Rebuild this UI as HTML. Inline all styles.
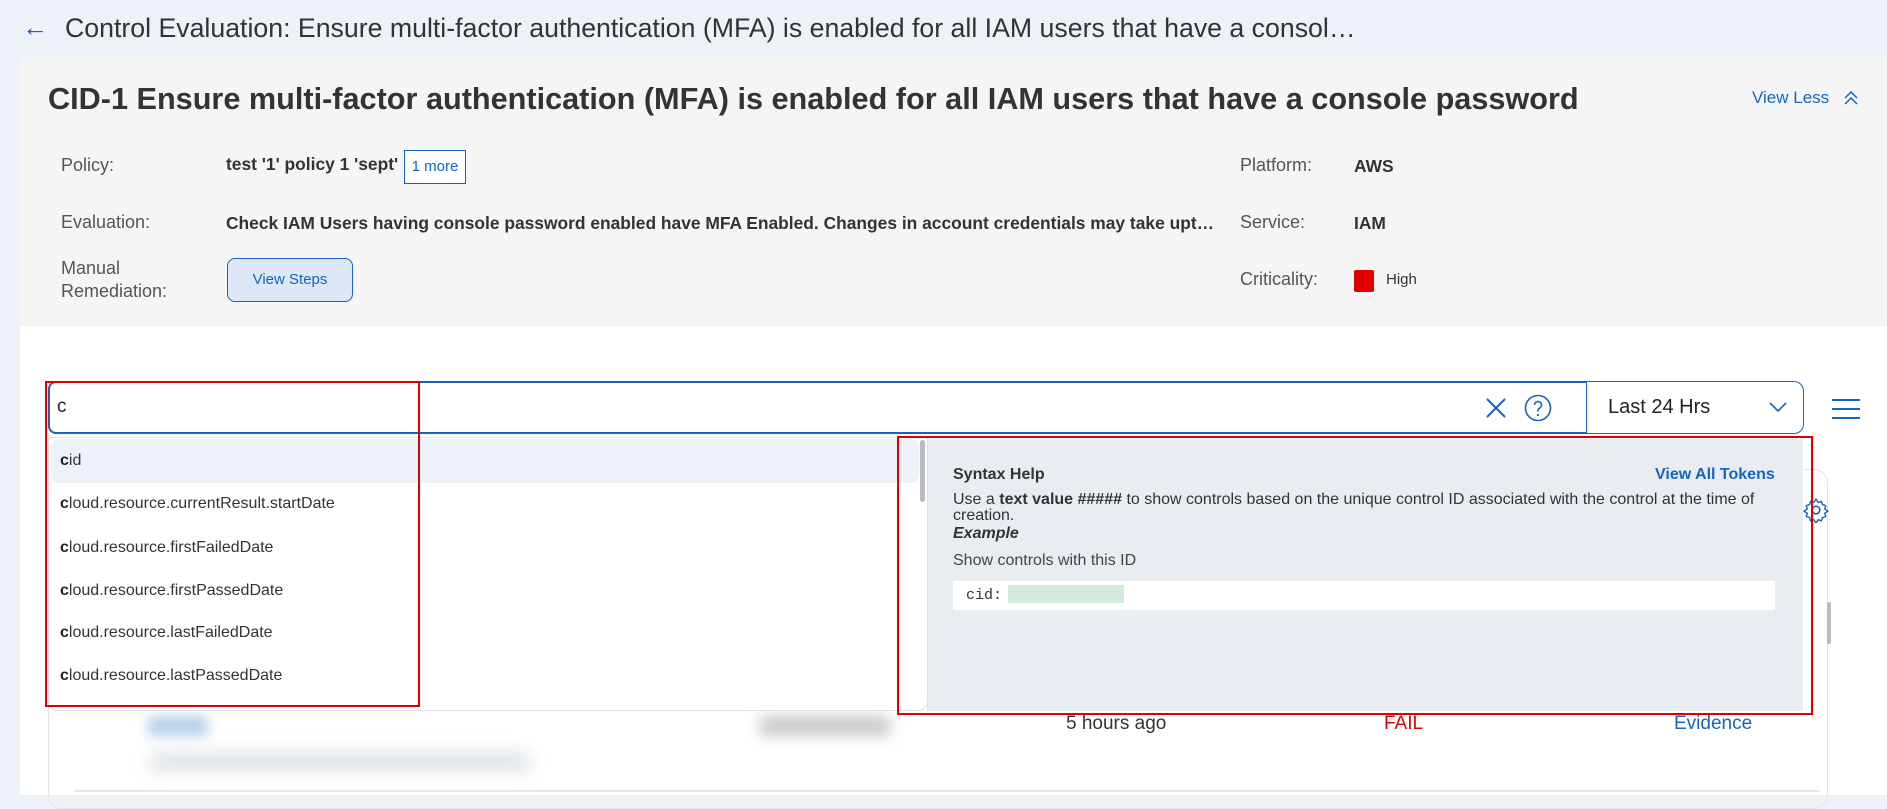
<!DOCTYPE html>
<html><head><meta charset="utf-8"><style>
*{box-sizing:border-box;margin:0;padding:0}
body{width:1887px;height:795px;overflow:hidden;background:#edf1f8;font-family:"Liberation Sans",sans-serif;position:relative;color:#333}
.a{position:absolute;white-space:nowrap}
.lbl{font-size:18px;color:#555}
.val{font-size:17.4px;font-weight:bold;color:#333}
.item{position:absolute;left:48px;width:874px;height:44px;line-height:44px;padding-left:12px;font-size:16px;color:#333}
.item b{color:#222}
</style></head><body>
<div class="a" style="left:22px;top:12px;font-size:26px;color:#1565c0;font-weight:lighter">&#8592;</div>
<div class="a" style="left:65px;top:13px;font-size:26.7px;color:#333">Control Evaluation: Ensure multi-factor authentication (MFA) is enabled for all IAM users that have a consol…</div>

<div class="a" style="left:20px;top:57px;width:1867px;height:269px;background:#f5f5f5;border-radius:8px 0 0 0"></div>
<div class="a" style="left:48px;top:82px;font-size:30.65px;font-weight:bold;color:#333">CID-1 Ensure multi-factor authentication (MFA) is enabled for all IAM users that have a console password</div>
<div class="a" style="left:1752px;top:88px;font-size:17px;color:#1565c0">View Less</div>
<svg class="a" style="left:1843px;top:89px" width="16" height="18" viewBox="0 0 16 18"><path d="M2 9 L8 3 L14 9 M2 15 L8 9 L14 15" fill="none" stroke="#1565c0" stroke-width="1.5"/></svg>

<div class="a lbl" style="left:61px;top:155px">Policy:</div>
<div class="a val" style="left:226px;top:154px">test '1' policy 1 'sept'</div>
<div class="a" style="left:404px;top:150px;width:62px;height:34px;border:1px solid #1565c0;background:#fff;font-size:15px;color:#1565c0;line-height:32px;text-align:center">1 more</div>
<div class="a lbl" style="left:61px;top:212px">Evaluation:</div>
<div class="a val" style="left:226px;top:213px">Check IAM Users having console password enabled have MFA Enabled. Changes in account credentials may take upt…</div>
<div class="a lbl" style="left:61px;top:257px;line-height:23px">Manual<br>Remediation:</div>
<div class="a" style="left:227px;top:258px;width:126px;height:44px;border:1px solid #1565c0;border-radius:8px;background:#dce8f5;color:#1565c0;font-size:15px;line-height:42px;text-align:center">View Steps</div>
<div class="a lbl" style="left:1240px;top:155px">Platform:</div>
<div class="a val" style="left:1354px;top:156px">AWS</div>
<div class="a lbl" style="left:1240px;top:212px">Service:</div>
<div class="a val" style="left:1354px;top:213px">IAM</div>
<div class="a lbl" style="left:1240px;top:269px">Criticality:</div>
<div class="a" style="left:1354px;top:270px;width:20px;height:22px;background:#e00000;border-radius:2px"></div>
<div class="a" style="left:1386px;top:271px;font-size:15px;color:#333">High</div>

<div class="a" style="left:20px;top:326px;width:1867px;height:469px;background:#fff"></div>

<div class="a" style="left:48px;top:469px;width:1780px;height:340px;border:1px solid #e2e6ea;border-radius:14px"></div>
<svg class="a" style="left:1803px;top:497px" width="26" height="26" viewBox="0 0 24 24"><circle cx="12" cy="12" r="3.5" fill="none" stroke="#1565c0" stroke-width="1.5"/><path d="M12 2l2 3 3-1 1 3 3 1-1 3 3 2-3 2 1 3-3 1-1 3-3-1-2 3-2-3-3 1-1-3-3-1 1-3-3-2 3-2-1-3 3-1 1-3 3 1z" fill="none" stroke="#1565c0" stroke-width="1.3"/></svg>
<div class="a" style="left:924px;top:556px;width:876px;height:44px;background:#eef2f8;border-radius:8px"></div>
<div class="a" style="left:1827px;top:602px;width:4px;height:42px;background:#bbb;border-radius:2px"></div>
<div class="a" style="left:1066px;top:713px;font-size:19px;color:#333">5 hours ago</div>
<div class="a" style="left:1384px;top:713px;font-size:19px;color:#e00000">FAIL</div>
<div class="a" style="left:1674px;top:713px;font-size:19px;color:#1565c0">Evidence</div>
<div class="a" style="left:148px;top:716px;width:60px;height:20px;background:#b8d0ea;filter:blur(6px)"></div>
<div class="a" style="left:150px;top:752px;width:380px;height:20px;background:#e0e4e8;filter:blur(8px)"></div>
<div class="a" style="left:760px;top:716px;width:130px;height:20px;background:#c8cacc;filter:blur(7px)"></div>
<div class="a" style="left:75px;top:790px;width:1745px;height:2px;background:#e4e6e8"></div>

<div class="a" style="left:48px;top:381px;width:1540px;height:53px;border:2px solid #1565c0;border-radius:8px 0 0 8px;background:#fff"></div>
<div class="a" style="left:57px;top:396px;font-size:19px;color:#222">c</div>
<svg class="a" style="left:1484px;top:396px" width="24" height="24" viewBox="0 0 24 24"><path d="M3 3L21 21M21 3L3 21" stroke="#1565c0" stroke-width="2"/></svg>
<svg class="a" style="left:1524px;top:394px" width="28" height="28" viewBox="0 0 28 28"><circle cx="14" cy="14" r="12.5" fill="none" stroke="#1565c0" stroke-width="1.6"/><path d="M10.5 11a3.5 3.5 0 1 1 5 3.2c-1 .5-1.5 1.2-1.5 2.3v1" fill="none" stroke="#1565c0" stroke-width="1.6"/><circle cx="14" cy="21" r="1.1" fill="#1565c0"/></svg>
<div class="a" style="left:1586px;top:381px;width:218px;height:53px;border:1.5px solid #1565c0;border-radius:0 10px 10px 0;background:#fff"></div>
<div class="a" style="left:1608px;top:396px;font-size:20px;color:#222">Last 24 Hrs</div>
<svg class="a" style="left:1768px;top:400px" width="20" height="14" viewBox="0 0 20 14"><path d="M2 3L10 11L18 3" fill="none" stroke="#1565c0" stroke-width="1.6"/></svg>
<svg class="a" style="left:1832px;top:398px" width="28" height="22" viewBox="0 0 28 22"><path d="M0 2H28M0 11H28M0 20H28" stroke="#1565c0" stroke-width="2"/></svg>

<div class="a" style="left:48px;top:437px;width:880px;height:274px;background:#fff;border:1px solid #dde2e8;border-radius:0 0 10px 10px"></div>
<div class="a" style="left:51px;top:439px;width:868px;height:44px;background:#edf1f8;border-radius:8px"></div>
<div class="item" style="top:439px"><b>c</b>id</div>
<div class="item" style="top:482px"><b>c</b>loud.resource.currentResult.startDate</div>
<div class="item" style="top:526px"><b>c</b>loud.resource.firstFailedDate</div>
<div class="item" style="top:569px"><b>c</b>loud.resource.firstPassedDate</div>
<div class="item" style="top:611px"><b>c</b>loud.resource.lastFailedDate</div>
<div class="item" style="top:654px"><b>c</b>loud.resource.lastPassedDate</div>
<div class="a" style="left:920px;top:440px;width:5px;height:62px;background:#b8bcc2;border-radius:3px"></div>

<div class="a" style="left:927px;top:439px;width:876px;height:272px;background:#e9ecf0;border-left:1px solid #dde2e8"></div>
<div class="a" style="left:953px;top:466px;font-size:16px;font-weight:bold;color:#333">Syntax Help</div>
<div class="a" style="left:1655px;top:466px;font-size:16px;font-weight:bold;color:#1565c0">View All Tokens</div>
<div class="a" style="left:953px;top:492px;width:822px;white-space:normal;font-size:16px;line-height:16px;color:#333">Use a <b>text value #####</b> to show controls based on the unique control ID associated with the control at the time of creation.</div>
<div class="a" style="left:953px;top:525px;font-size:16px;font-weight:bold;font-style:italic;color:#333">Example</div>
<div class="a" style="left:953px;top:552px;font-size:16px;color:#444">Show controls with this ID</div>
<div class="a" style="left:953px;top:581px;width:822px;height:29px;background:#fff"></div>
<div class="a" style="left:966px;top:587px;font-family:'Liberation Mono',monospace;font-size:15px;color:#333">cid:</div>
<div class="a" style="left:1008px;top:585px;width:116px;height:18px;background:#d2eadb"></div>

<div class="a" style="left:45px;top:381px;width:375px;height:326px;border:2px solid #e00000"></div>
<div class="a" style="left:897px;top:436px;width:916px;height:279px;border:2px solid #e00000"></div>
</body></html>
